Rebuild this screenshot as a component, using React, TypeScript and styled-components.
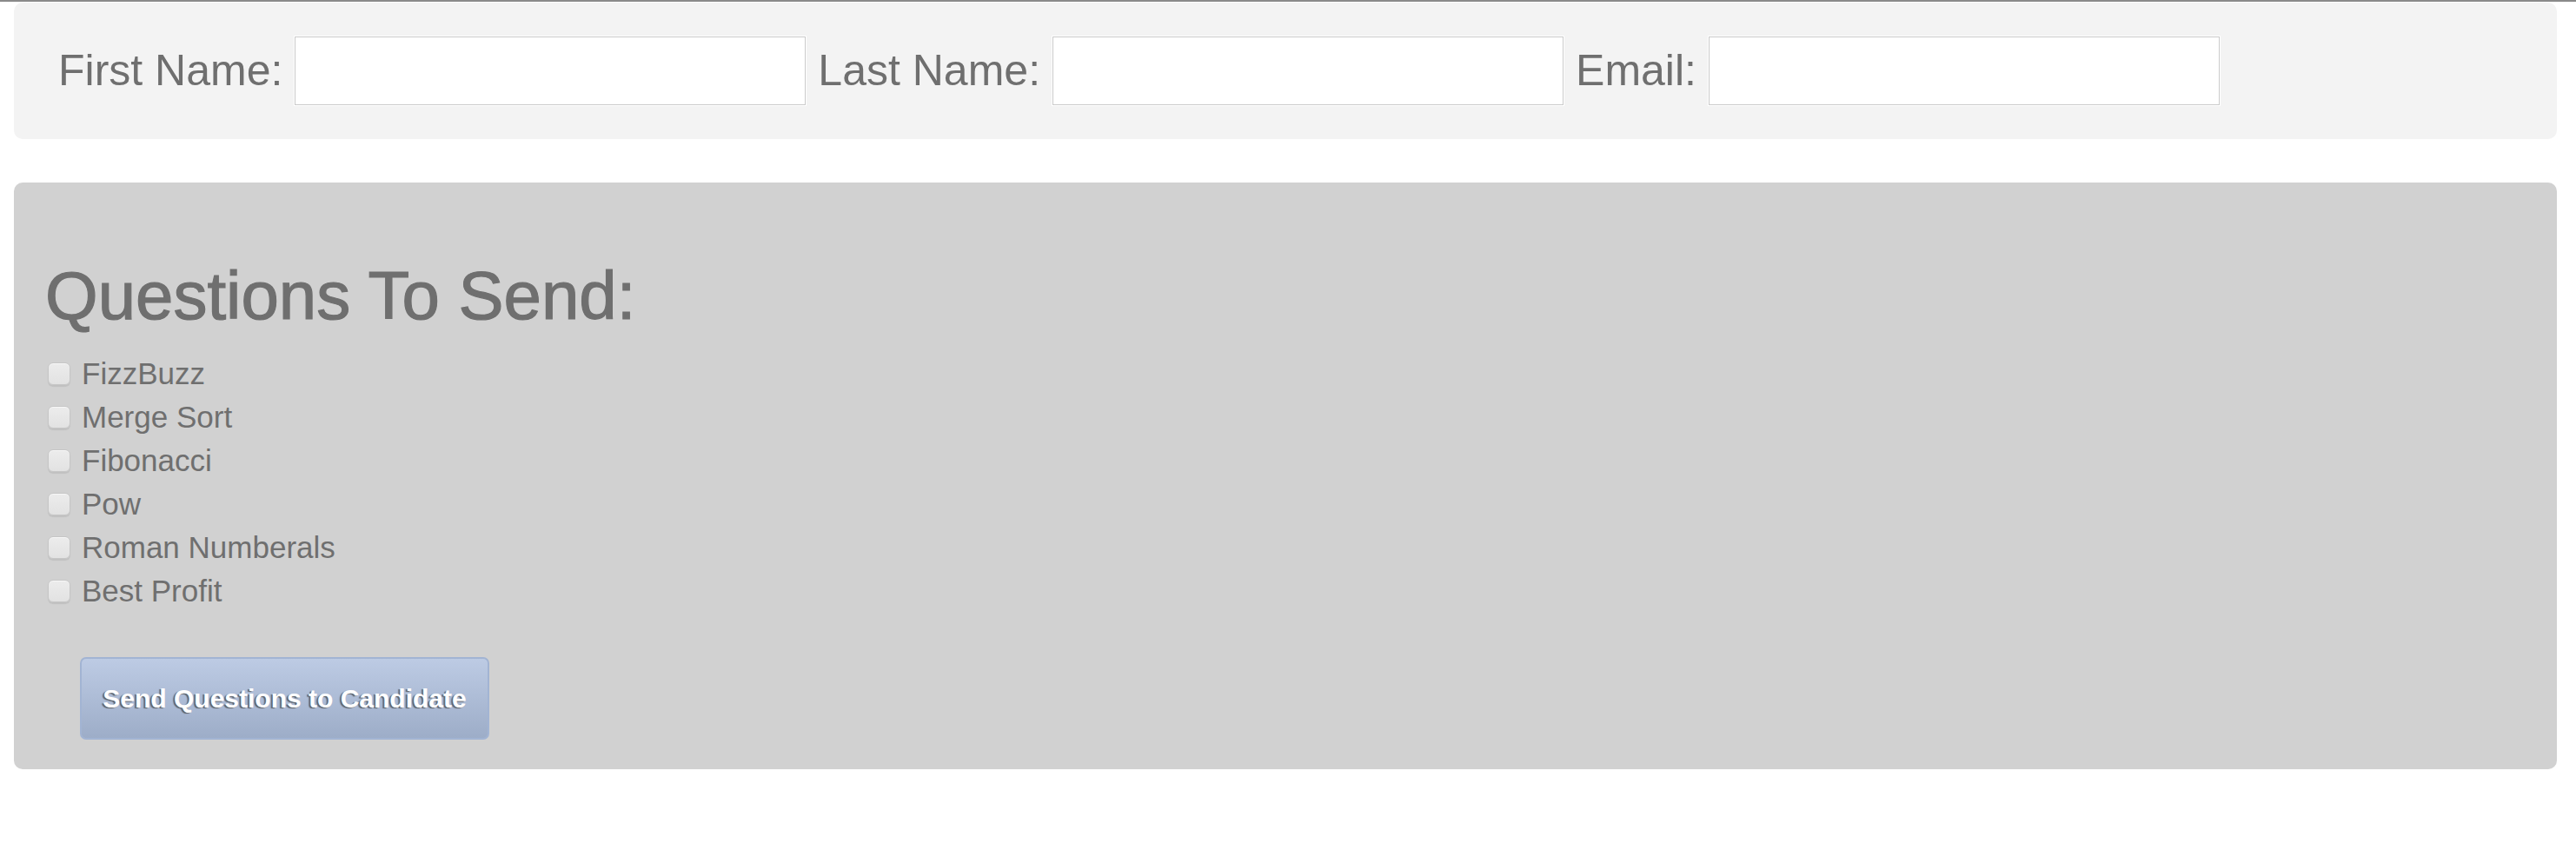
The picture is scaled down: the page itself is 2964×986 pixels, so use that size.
import React from "react";
import styled, { createGlobalStyle } from "styled-components";

const GlobalStyle = createGlobalStyle`
  html, body {
    margin: 0;
    padding: 0;
    background: #ffffff;
  }
  body {
    font-family: "Liberation Sans", Arial, Helvetica, sans-serif;
  }
`;

const Page = styled.div`
  width: 2964px;
  border-top: 2px solid #8a8a8a;
  box-sizing: border-box;
`;

const FormBar = styled.form`
  box-sizing: border-box;
  margin: 1px 0 0 16px;
  width: 2926px;
  height: 157px;
  padding-left: 51px;
  padding-bottom: 1px;
  background: #f3f3f3;
  border-radius: 10px;
  display: flex;
  align-items: center;
  gap: 12px;
`;

const FieldLabel = styled.label`
  font-size: 50px;
  line-height: 60px;
  color: #6f6f6f;
  white-space: nowrap;
`;

const TextInput = styled.input`
  box-sizing: border-box;
  width: 588px;
  height: 79px;
  margin: 1px 2px 1px 2px;
  border: 1px solid #cacaca;
  border-radius: 0;
  background: #ffffff;
  box-shadow: 0 0 0 1px #ffffff;
  outline: none;
  font-size: 30px;
  font-family: "Liberation Sans", Arial, sans-serif;
`;

const QuestionsPanel = styled.section`
  box-sizing: border-box;
  margin: 50px 0 0 16px;
  width: 2926px;
  padding: 87px 36px 34px 36px;
  background: #d1d1d1;
  border-radius: 10px;
  display: flex;
  flex-direction: column;
  align-items: flex-start;
`;

const Heading = styled.h2`
  margin: 0;
  font-size: 78px;
  line-height: 86px;
  font-weight: normal;
  color: #6f6f6f;
  -webkit-text-stroke: 1.2px #6f6f6f;
`;

const QuestionList = styled.ul`
  list-style: none;
  margin: 22px 0 0 0;
  padding: 0;
  display: flex;
  flex-direction: column;
`;

const QuestionRow = styled.li`
  height: 50px;
  display: flex;
  align-items: center;
  gap: 13px;
`;

const CheckBox = styled.input.attrs({ type: "checkbox" })`
  appearance: none;
  -webkit-appearance: none;
  box-sizing: border-box;
  margin: 0 0 0 3px;
  width: 26px;
  height: 26px;
  border-radius: 6px;
  border: 1px solid #c6c6c6;
  background: linear-gradient(#ececec, #e2e2e2);
  box-shadow: 0 2px 1px rgba(0, 0, 0, 0.08), inset 0 1px 0 rgba(255, 255, 255, 0.6);
`;

const QuestionLabel = styled.label`
  font-size: 35px;
  line-height: 50px;
  color: #6f6f6f;
`;

const SendButton = styled.button`
  box-sizing: border-box;
  margin: 51px 0 0 40px;
  width: 471px;
  height: 95px;
  border: 2px solid #a2b4d3;
  border-radius: 7px;
  background: linear-gradient(#bdcbe4, #9dadc8);
  color: #ffffff;
  font-family: "Liberation Sans", Arial, sans-serif;
  font-size: 30px;
  font-weight: bold;
  text-shadow: -2px 1px 1px rgba(85, 85, 85, 0.85);
  padding: 0;
  cursor: pointer;
`;

const questions = [
  "FizzBuzz",
  "Merge Sort",
  "Fibonacci",
  "Pow",
  "Roman Numberals",
  "Best Profit",
];

export default function App() {
  return (
    <>
      <GlobalStyle />
      <Page>
        <FormBar onSubmit={(e) => e.preventDefault()}>
          <FieldLabel htmlFor="first">First Name:</FieldLabel>
          <TextInput id="first" type="text" />
          <FieldLabel htmlFor="last">Last Name:</FieldLabel>
          <TextInput id="last" type="text" />
          <FieldLabel htmlFor="email">Email:</FieldLabel>
          <TextInput id="email" type="text" />
        </FormBar>
        <QuestionsPanel>
          <Heading>Questions To Send:</Heading>
          <QuestionList>
            {questions.map((q, i) => (
              <QuestionRow key={q}>
                <CheckBox id={`q${i}`} />
                <QuestionLabel htmlFor={`q${i}`}>{q}</QuestionLabel>
              </QuestionRow>
            ))}
          </QuestionList>
          <SendButton type="button">Send Questions to Candidate</SendButton>
        </QuestionsPanel>
      </Page>
    </>
  );
}
